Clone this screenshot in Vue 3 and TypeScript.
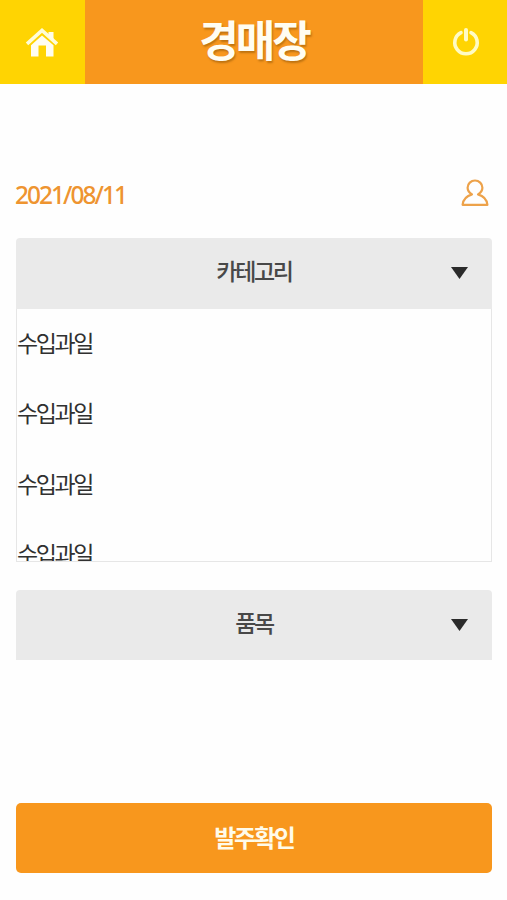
<script setup lang="ts">
import { ref } from 'vue'

const date = ref('2021/08/11')
const items = ref<string[]>(['수입과일', '수입과일', '수입과일', '수입과일'])
</script>

<template>
  <div class="screen">
    <header class="topbar">
      <button class="nav" aria-label="home">
        <svg class="home" viewBox="0 0 34 30" width="34" height="30">
          <path d="M2 15.8 L17 2.5 L32 15.8" fill="none" stroke="#fffdd8" stroke-width="3.6" />
          <path d="M23.5 4h5v9l-5-4.5z" fill="#fffdea" />
          <path d="M6 17.2 L17 7.6 L28.5 17.2 V28.5 H21 V17.5 H13.5 V28.5 H6 Z" fill="#fffdf0" />
        </svg>
      </button>
      <h1 class="title">경매장</h1>
      <button class="nav" aria-label="power">
        <svg class="power" viewBox="0 0 30 30" width="30" height="30">
          <path d="M10 5.6A11.2 11.2 0 1 0 20 5.6" fill="none" stroke="#fffbc4" stroke-width="3.6" stroke-linecap="round" />
          <path d="M15 3V12.5" stroke="#fffbc4" stroke-width="4" stroke-linecap="round" />
        </svg>
      </button>
    </header>

    <main class="content">
      <div class="info">
        <span class="date">{{ date }}</span>
        <svg class="user" viewBox="0 0 28 28" width="28" height="28">
          <path
            d="M11 15.4C8.2 13.6 6.6 11.2 6.6 8.7A7.4 7.2 0 0 1 21.4 8.7C21.4 11.2 19.8 13.6 17 15.4C22.5 17 25.7 19.6 26.4 25.8H1.6C2.3 19.6 5.5 17 11 15.4Z"
            fill="none" stroke="#eda24a" stroke-width="2.2" stroke-linejoin="round" />
        </svg>
      </div>

      <section class="select">
        <button class="select-head">
          <span>카테고리</span>
          <svg class="arrow" viewBox="0 0 17 12" width="17" height="12"><path d="M0 0h17L8.5 12z" fill="#2b2b2b" /></svg>
        </button>
        <ul class="options">
          <li v-for="(item, i) in items" :key="i">{{ item }}</li>
        </ul>
      </section>

      <section class="select second">
        <button class="select-head">
          <span>품목</span>
          <svg class="arrow" viewBox="0 0 17 12" width="17" height="12"><path d="M0 0h17L8.5 12z" fill="#2b2b2b" /></svg>
        </button>
      </section>

      <button class="submit">발주확인</button>
    </main>
  </div>
</template>

<style>
body {
  margin: 0;
  background: #fefefe;
}
</style>

<style scoped>
.screen {
  height: 900px;
  overflow: hidden;
  background: #fefefe;
  font-family: "Noto Sans CJK KR", sans-serif;
}
button {
  border: 0;
  padding: 0;
  margin: 0;
  font-family: inherit;
}
.topbar {
  display: grid;
  grid-template-columns: 85px 1fr 84px;
  height: 84px;
  background: #f8971d;
}
.nav {
  display: flex;
  align-items: center;
  justify-content: center;
  background: #ffd402;
}
.home {
  margin-top: 2px;
  margin-right: 2px;
}
.power {
  margin-left: 1px;
}
.title {
  margin: 0;
  text-align: center;
  font-size: 43px;
  font-weight: 700;
  line-height: 76px;
  letter-spacing: -3px;
  color: #fffdf2;
  text-shadow: 1px 2px 2px rgba(120, 70, 0, 0.45);
}
.content {
  padding: 93px 15px 0 16px;
}
.info {
  display: flex;
  justify-content: space-between;
  align-items: center;
  height: 34px;
  padding-right: 3px;
}
.date {
  margin-left: -1px;
  font-family: "Noto Sans", sans-serif;
  font-size: 24.5px;
  font-weight: 500;
  letter-spacing: -2px;
  color: #ee9430;
}
.user {
  margin-bottom: 2px;
}
.select {
  margin-top: 27px;
}
.select-head {
  display: grid;
  grid-template-columns: 1fr auto 1fr;
  align-items: center;
  width: 100%;
  height: 71px;
  border-radius: 4px 4px 0 0;
  background: #eaeaea;
  color: #484848;
  font-size: 23px;
  font-weight: 500;
  letter-spacing: -2.3px;
}
.select-head span {
  grid-column: 2;
  line-height: 30px;
  margin-bottom: 7px;
}
.arrow {
  justify-self: end;
  margin-right: 24px;
  margin-bottom: 1px;
}
.options {
  height: 253px;
  margin: 0;
  padding: 0;
  overflow: hidden;
  box-sizing: border-box;
  border: 1px solid #e6e6e6;
  border-top: 0;
  list-style: none;
}
.options li {
  height: 70.3px;
  line-height: 66px;
  font-size: 23px;
  letter-spacing: -2.4px;
  color: #303030;
}
.second {
  margin-top: 28px;
}
.second .select-head {
  height: 70px;
}
.submit {
  display: block;
  width: 100%;
  height: 70px;
  margin-top: 143px;
  padding-bottom: 4px;
  border-radius: 5px;
  background: #f8971d;
  color: #fffbea;
  font-size: 24px;
  font-weight: 700;
  letter-spacing: -2.2px;
}
</style>
